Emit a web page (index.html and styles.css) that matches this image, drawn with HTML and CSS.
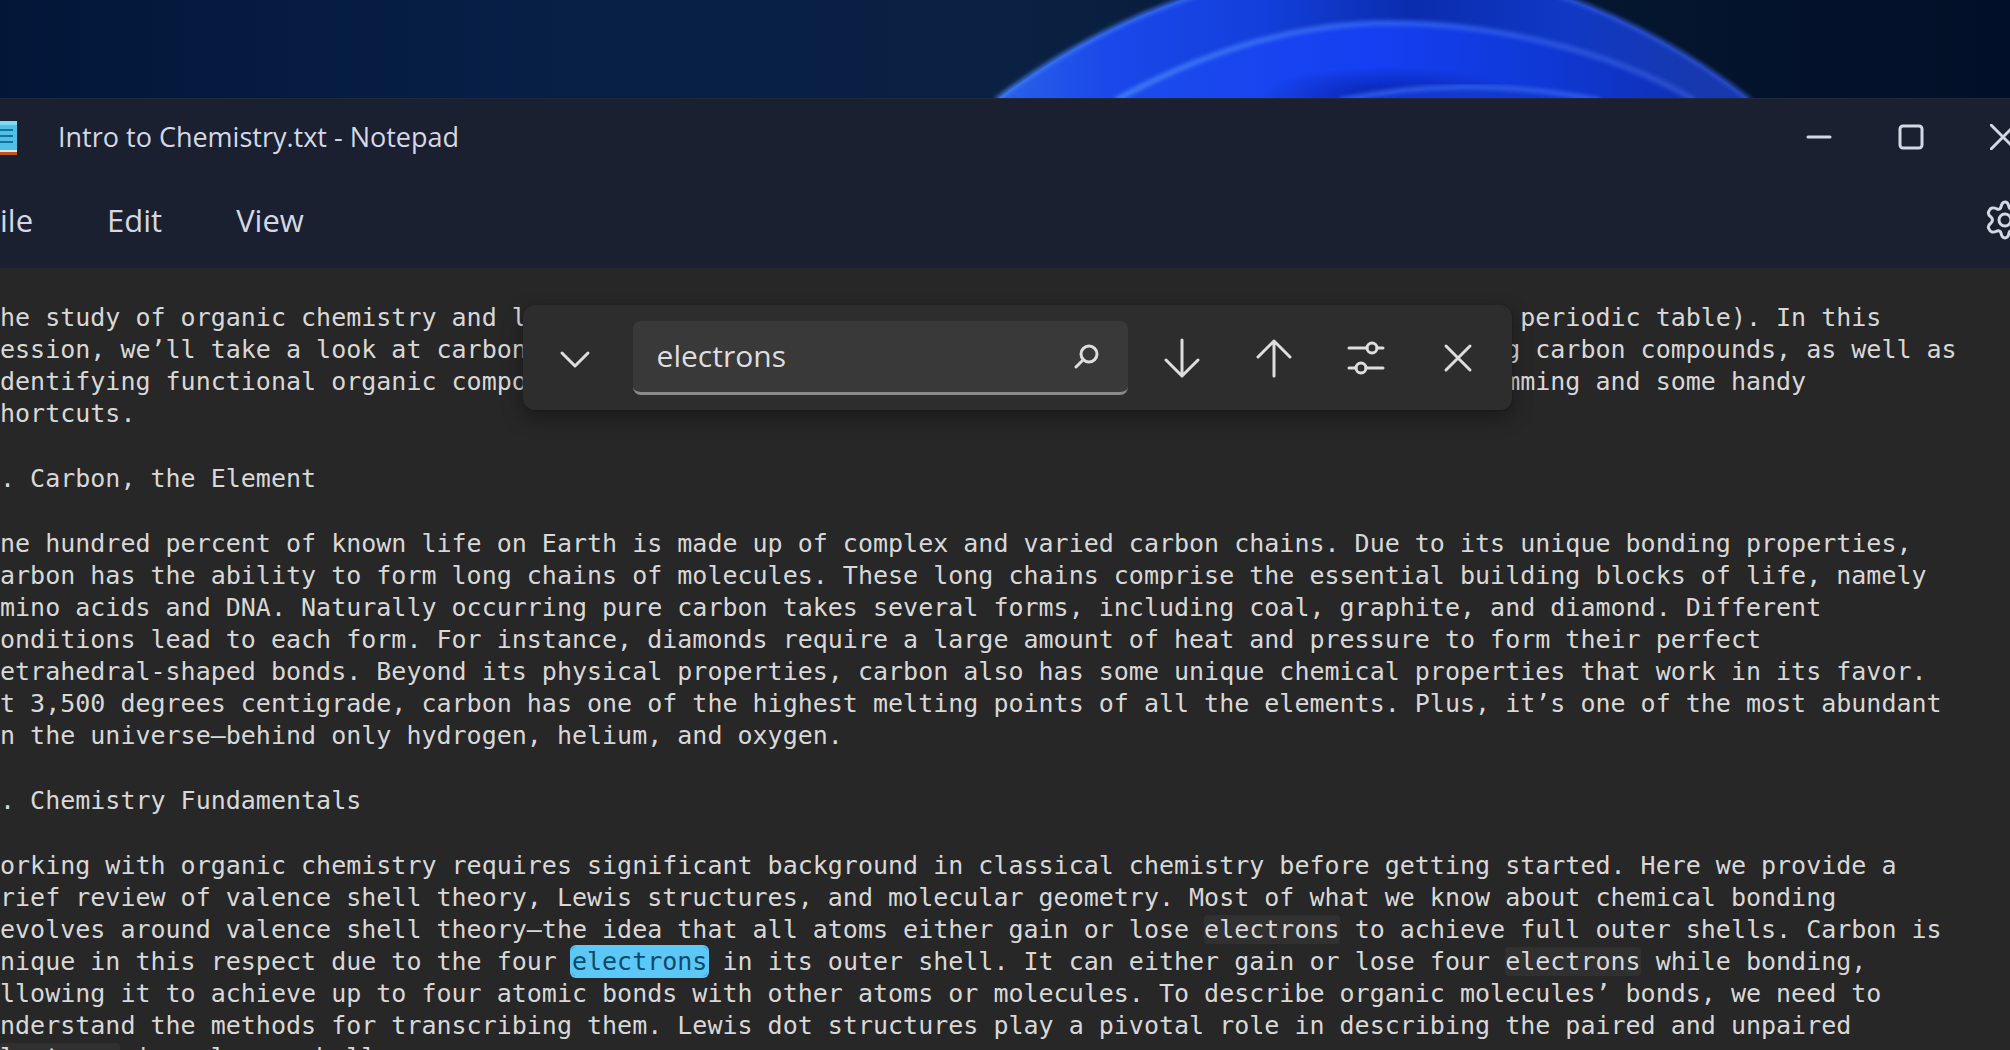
FILE: index.html
```html
<!DOCTYPE html>
<html lang="en">
<head>
<meta charset="utf-8">
<title>Intro to Chemistry.txt - Notepad</title>
<link rel="stylesheet" href="styles.css">
</head>
<body>
<div class="desktop">
  <svg class="wallpaper" viewBox="0 0 2010 100" preserveAspectRatio="xMidYMin slice" aria-hidden="true">
    <defs>
      <linearGradient id="outer" x1="0" x2="1"><stop offset="0" stop-color="#2a62e8"/><stop offset=".15" stop-color="#1a48ea"/><stop offset=".35" stop-color="#1340dc"/><stop offset=".55" stop-color="#0a2cae"/><stop offset=".75" stop-color="#1038c4"/><stop offset="1" stop-color="#1a38a8"/></linearGradient>
      <linearGradient id="middle" x1="0" x2="1"><stop offset="0" stop-color="#1c4cec"/><stop offset=".45" stop-color="#153ff2"/><stop offset=".75" stop-color="#0f38d4"/><stop offset="1" stop-color="#1030b4"/></linearGradient>
      <radialGradient id="shade"><stop offset="0" stop-color="#0620a0" stop-opacity=".9"/><stop offset="1" stop-color="#0620a0" stop-opacity="0"/></radialGradient>
      <linearGradient id="rim" x1="0" x2="1"><stop offset="0" stop-color="#4480f4"/><stop offset=".5" stop-color="#3060f4"/><stop offset="1" stop-color="#2c52d0"/></linearGradient>
      <filter id="soft" x="-5%" y="-20%" width="110%" height="140%"><feGaussianBlur stdDeviation="2"/></filter>
    </defs>
    <path d="M996 100Q1092 28 1200 -6Q1370 -50 1555 -6Q1660 30 1750 100Z" fill="url(#outer)"/>
    <path d="M996 100Q1092 28 1200 -6M1555 -6Q1660 30 1750 100" fill="none" stroke="url(#rim)" stroke-width="4" filter="url(#soft)"/>
    <path d="M1116 100C1210 48 1300 23 1390 23C1490 23 1610 50 1694 100Z" fill="url(#middle)"/>
    <ellipse cx="1390" cy="96" rx="130" ry="30" fill="url(#shade)"/>
    <path d="M1116 100C1210 48 1300 23 1390 23C1490 23 1610 50 1694 100" fill="none" stroke="url(#rim)" stroke-width="5" filter="url(#soft)"/>
    <path d="M1340 100Q1460 74 1600 100Z" fill="#1238d0"/>
    <path d="M1340 100Q1460 74 1600 100" fill="none" stroke="#3564ee" stroke-width="4" filter="url(#soft)"/>
  </svg>
</div>
<main class="window">
  <header class="chrome">
    <div class="titlebar">
      <svg class="app-icon" width="18" height="38" viewBox="0 0 18 38" aria-hidden="true"><path d="M0 3h17v31H0z" fill="#4fc0e6"/><path d="M0 3h17v4H0z" fill="#7cdcf4"/><path d="M0 12h13M0 18h13M0 24h13" stroke="#16729c" stroke-width="2"/><path d="M0 32h17v2H0z" fill="#e4e4e4"/><path d="M0 34h17v3H0z" fill="#b85a20"/></svg>
      <h1 class="title">Intro to Chemistry.txt - Notepad</h1>
      <div class="window-buttons">
        <button type="button" aria-label="Minimize"><svg width="26" height="26" viewBox="0 0 26 26"><path d="M2 13h22"/></svg></button>
        <button type="button" aria-label="Maximize"><svg width="26" height="26" viewBox="0 0 26 26"><rect x="2" y="2" width="22" height="22" rx="3"/></svg></button>
        <button type="button" aria-label="Close"><svg width="26" height="26" viewBox="0 0 26 26"><path d="M1 1l24 24M25 1L1 25"/></svg></button>
      </div>
    </div>
    <nav class="menubar">
      <button type="button" class="menu">ile</button>
      <button type="button" class="menu">Edit</button>
      <button type="button" class="menu">View</button>
      <button type="button" class="settings" aria-label="Settings"><svg width="40" height="40" viewBox="0 0 40 40"><circle cx="20" cy="20" r="6"/><path d="M16 7Q17 2 20 2T24 7Q25 10 28 9Q34 6 36 11Q38 14 34 17Q31 20 34 23Q38 26 36 29Q34 34 28 31Q25 30 24 33Q23 38 20 38T16 33Q15 30 12 31Q6 34 4 29Q2 26 6 23Q9 20 6 17Q2 14 4 11Q6 6 12 9Q15 10 16 7Z"/></svg></button>
    </nav>
  </header>
  <article class="document">
    <p>he study of organic chemistry and l                                                                  periodic table). In this
ession, we’ll take a look at carbon                                                                 g carbon compounds, as well as
dentifying functional organic compo                                                                 mming and some handy
hortcuts.</p>
    <p>. Carbon, the Element</p>
    <p>ne hundred percent of known life on Earth is made up of complex and varied carbon chains. Due to its unique bonding properties,
arbon has the ability to form long chains of molecules. These long chains comprise the essential building blocks of life, namely
mino acids and DNA. Naturally occurring pure carbon takes several forms, including coal, graphite, and diamond. Different
onditions lead to each form. For instance, diamonds require a large amount of heat and pressure to form their perfect
etrahedral-shaped bonds. Beyond its physical properties, carbon also has some unique chemical properties that work in its favor.
t 3,500 degrees centigrade, carbon has one of the highest melting points of all the elements. Plus, it’s one of the most abundant
n the universe—behind only hydrogen, helium, and oxygen.</p>
    <p>. Chemistry Fundamentals</p>
    <p>orking with organic chemistry requires significant background in classical chemistry before getting started. Here we provide a
rief review of valence shell theory, Lewis structures, and molecular geometry. Most of what we know about chemical bonding
evolves around valence shell theory—the idea that all atoms either gain or lose <mark>electrons</mark> to achieve full outer shells. Carbon is
nique in this respect due to the four <mark class="current">electrons</mark> in its outer shell. It can either gain or lose four <mark>electrons</mark> while bonding,
llowing it to achieve up to four atomic bonds with other atoms or molecules. To describe organic molecules’ bonds, we need to
nderstand the methods for transcribing them. Lewis dot structures play a pivotal role in describing the paired and unpaired
<mark>lectrons</mark> in valence shells.</p>
  </article>
</main>
<form class="find-bar" role="search">
  <button type="button" aria-label="Show replace"><svg width="40" height="32" viewBox="0 0 40 32"><path d="M7 11l13 13 13-13"/></svg></button>
  <div class="find-field">
    <input type="text" value="electrons" aria-label="Find">
    <svg width="26" height="26" viewBox="0 0 26 26" aria-hidden="true"><circle cx="15" cy="11" r="8"/><path d="M9 17l-7 7"/></svg>
  </div>
  <div class="find-tools">
    <button type="button" aria-label="Find next"><svg width="40" height="40" viewBox="0 0 40 40"><path d="M20 2v36M4 22l16 16 16-16"/></svg></button>
    <button type="button" aria-label="Find previous"><svg width="40" height="40" viewBox="0 0 40 40"><path d="M20 38V3M4 19L20 3l16 16"/></svg></button>
    <button type="button" aria-label="Find options"><svg width="40" height="40" viewBox="0 0 40 40"><path d="M3 10h18M31 10h6M3 30h7M20 30h17"/><circle cx="26" cy="10" r="5"/><circle cx="15" cy="30" r="5"/></svg></button>
    <button type="button" aria-label="Close find"><svg width="40" height="40" viewBox="0 0 40 40"><path d="M8 8l24 24M32 8L8 32"/></svg></button>
  </div>
</form>
</body>
</html>
```
FILE: styles.css
```css
* { box-sizing: border-box; }
body {
  margin: 0;
  height: 100vh;
  overflow: hidden;
  background: #272727;
  color: #d8d8d8;
  font-family: "Open Sans", "Noto Sans", sans-serif;
}
button { padding: 0; border: 0; background: none; color: inherit; font: inherit; }
button svg, .find-field svg {
  display: block;
  fill: none;
  stroke: currentColor;
  stroke-width: 3;
  stroke-linecap: round;
  stroke-linejoin: round;
}
.desktop {
  height: 98px;
  overflow: hidden;
  background: linear-gradient(to right, #031638, #071f46 25%, #0a2143 50%, #04142c 85%, #020f28);
}
.wallpaper { display: block; width: 100%; height: 100px; }
.chrome {
  height: 170px;
  background: #1b2030;
  color: #d4d8e4;
  border-top: 1px solid #20283a;
}
.titlebar { display: flex; align-items: center; height: 76px; }
.title { flex: 1; margin: 0 0 0 40px; font-size: 27px; font-weight: 400; line-height: 36px; white-space: nowrap; }
.window-buttons { display: flex; gap: 66px; margin-right: -6px; }
.menubar { display: flex; align-items: center; height: 90px; font-size: 31px; line-height: 40px; }
.menu { margin-right: 74px; }
.settings { margin-left: auto; margin-right: -15px; }
.document {
  padding-top: 34px;
  font-family: "DejaVu Sans Mono", monospace;
  font-size: 25px;
  line-height: 32px;
}
.document p { margin: 0 0 33px; white-space: pre; }
mark { background: #303030; color: inherit; border-radius: 4px; }
mark.current { background: #5bc8f8; color: #0b4a68; box-shadow: 0 0 0 2px #5bc8f8; }
.find-bar {
  position: absolute;
  top: 305px;
  left: 26%;
  right: 24.8%;
  height: 105px;
  display: flex;
  align-items: center;
  padding: 0 34px 0 32px;
  border-radius: 12px;
  background: #2d2d2d;
  color: #dedede;
  box-shadow: 0 8px 20px rgba(0, 0, 0, .35), 0 0 2px #202020;
}
.find-field {
  flex: 1;
  min-width: 0;
  display: flex;
  align-items: center;
  height: 74px;
  margin: 0 34px 0 38px;
  padding: 0 28px 0 24px;
  border-radius: 8px;
  border-bottom: 3px solid #8a8a8a;
  background: #393939;
}
.find-tools { display: flex; gap: 52px; }
.find-field input {
  flex: 1;
  min-width: 0;
  padding: 0;
  border: 0;
  outline: 0;
  background: none;
  color: inherit;
  font: 30px/40px "Open Sans", "Noto Sans", sans-serif;
}
```
